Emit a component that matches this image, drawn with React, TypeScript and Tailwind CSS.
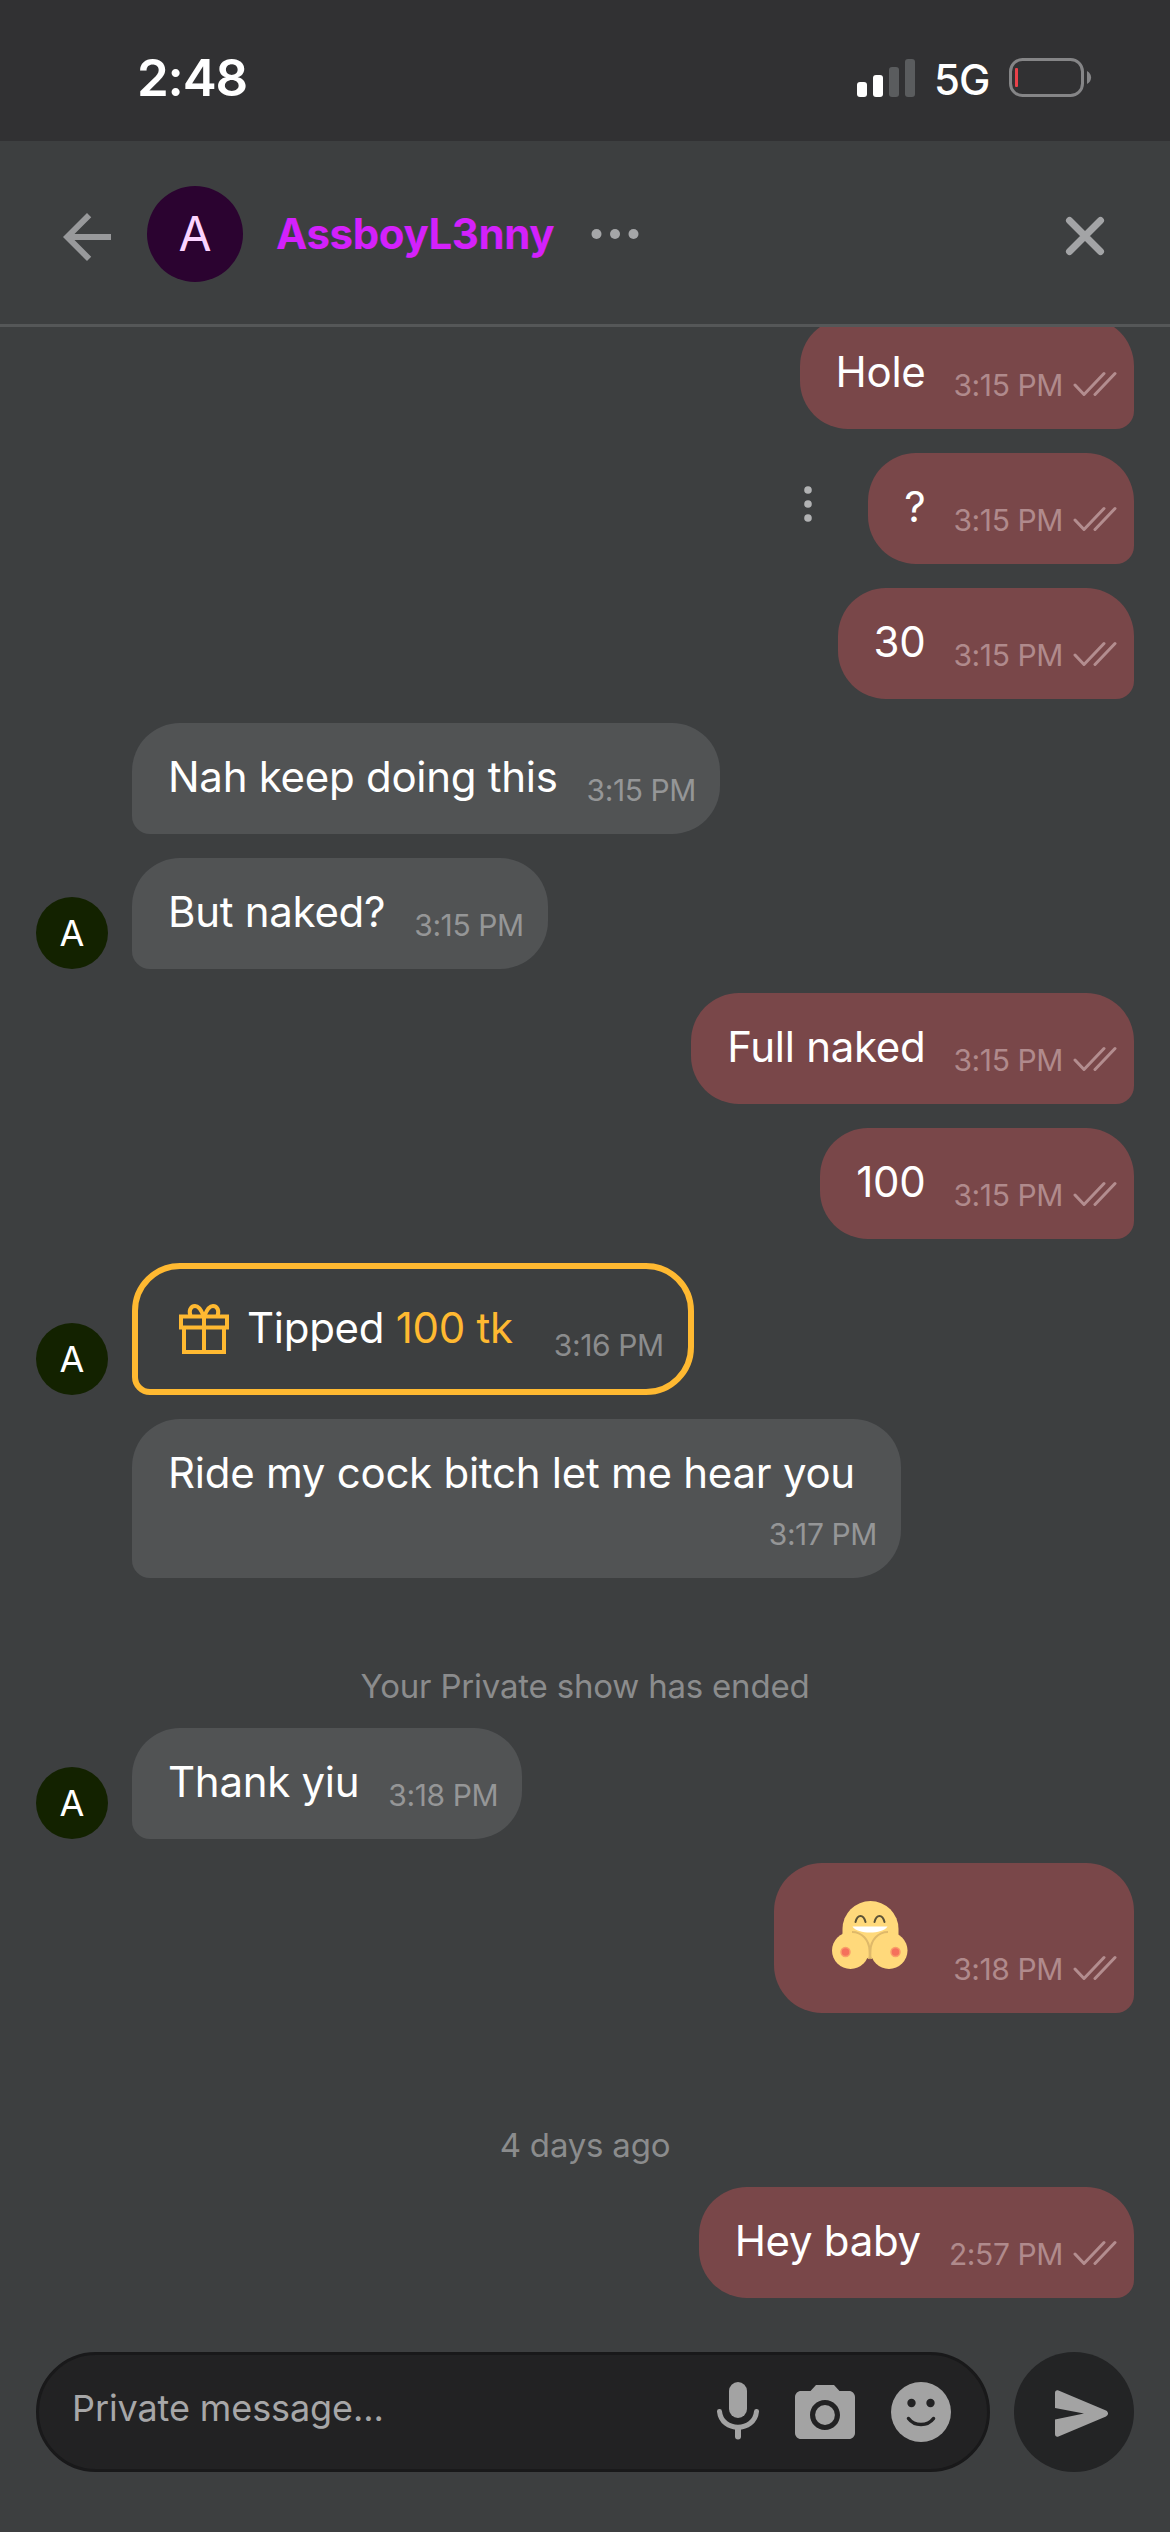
import type { ReactNode } from "react";

type Message = {
    id: number;
    own?: boolean;
    text: string;
    time: string;
    avatar?: boolean;
    menu?: boolean;
};

const firstMessages: Message[] = [
    { id: 1, own: true, text: "Hole", time: "3:15 PM" },
    { id: 2, own: true, text: "?", time: "3:15 PM", menu: true },
    { id: 3, own: true, text: "30", time: "3:15 PM" },
    { id: 4, text: "Nah keep doing this", time: "3:15 PM" },
    { id: 5, text: "But naked?", time: "3:15 PM", avatar: true },
    { id: 6, own: true, text: "Full naked", time: "3:15 PM" },
    { id: 7, own: true, text: "100", time: "3:15 PM" },
];

function StatusBar() {
    return (
        <div className="flex h-[141px] shrink-0 items-start justify-between bg-[#313133] pt-[48px] pr-[77px] pl-[137px] text-white">
            <span className="text-[51px] leading-[60px] font-semibold tracking-[-1.2px]">2:48</span>
            <div className="flex h-[60px] items-center">
                <svg width="58" height="38" viewBox="0 0 58 38">
                    <rect x="0" y="23" width="10" height="15" rx="3" fill="#fff" />
                    <rect x="16" y="16" width="10" height="22" rx="3" fill="#fff" />
                    <rect x="32" y="8" width="10" height="30" rx="3" fill="#5a5c5e" />
                    <rect x="48" y="0" width="10" height="38" rx="3" fill="#5a5c5e" />
                </svg>
                <span className="ml-[19px] w-[75px] pt-[3px] text-[42px] leading-[54px] font-medium tracking-[-1px]">5G</span>
                <svg width="84" height="40" viewBox="0 0 84 40">
                    <rect x="1.5" y="1.5" width="72" height="36" rx="12" fill="none" stroke="#858587" strokeWidth="3" />
                    <rect x="6" y="10" width="3" height="19" rx="1" fill="#e9414a" />
                    <path d="M78 13c5.500 3 5.500 10 0 13z" fill="#858587" />
                </svg>
            </div>
        </div>
    );
}

function Header() {
    return (
        <header className="flex h-[186px] shrink-0 items-center border-b-[3px] border-[#555758] pt-[3px] pr-[64px] pl-[51px]">
            <svg className="mt-[5px]" width="72" height="72" viewBox="0 0 24 24" fill="#98999b">
                <path d="M20 11H7.830l5.590-5.590L12 4l-8 8 8 8 1.410-1.410L7.830 13H20v-2z" />
            </svg>
            <div className="ml-[24px] flex size-[96px] items-center justify-center rounded-full bg-[#2b0330] text-[48px] leading-none text-[#fbd3ff]">
                A
            </div>
            <h1 className="ml-[33px] text-[42px] leading-[54px] font-bold tracking-[-0.4px] text-[#d321fb]">AssboyL3nny</h1>
            <svg className="ml-[37px]" width="48" height="12" viewBox="0 0 48 12" fill="#a5a6a8">
                <circle cx="5.500" cy="6" r="5" />
                <circle cx="24" cy="6" r="5" />
                <circle cx="42.500" cy="6" r="5" />
            </svg>
            <svg className="mt-[3px] ml-auto" width="42" height="42" viewBox="0 0 42 42">
                <path d="M5.500 5.500l31 31M36.500 5.500l-31 31" stroke="#a3a4a6" strokeWidth="7" strokeLinecap="round" />
            </svg>
        </header>
    );
}

function DoubleCheck() {
    return (
        <svg className="mt-[53px] ml-[10px]" width="44" height="26" viewBox="0 0 44 26" fill="none" stroke="#b38d8f" strokeWidth="3" strokeLinecap="round" strokeLinejoin="round">
            <path d="M2 14l9 9.500L31 2.500" />
            <path d="M22 23.500L42 2.500" />
        </svg>
    );
}

function Avatar() {
    return (
        <div className="flex size-[72px] items-center justify-center rounded-full bg-[#132200] text-[36px] leading-none text-white">
            A
        </div>
    );
}

function Time({ children }: { children: ReactNode }) {
    return (
        <span className="text-[30px] leading-[36px] tracking-[-0.4px] whitespace-nowrap">{children}</span>
    );
}

function MessageRow({ message }: { message: Message }) {
    if (message.own) {
        return (
            <div className="flex shrink-0 justify-end pr-[36px]">
                {message.menu && (
                    <svg className="mt-[32px] mr-[55px]" width="10" height="38" viewBox="0 0 10 38" fill="#b1b2b3">
                        <circle cx="5" cy="5" r="3.800" />
                        <circle cx="5" cy="19" r="3.800" />
                        <circle cx="5" cy="33" r="3.800" />
                    </svg>
                )}
                <div className="flex h-[111px] items-start rounded-[48px] rounded-br-[18px] bg-[#794749] pr-[17px] pl-[36px]">
                    <span className="mt-[27px] mr-[28px] text-[42px] leading-[54px] tracking-[-0.28px] text-white">{message.text}</span>
                    <span className="mt-[49px] flex text-[#b08a8c]">
                        <Time>{message.time}</Time>
                    </span>
                    <DoubleCheck />
                </div>
            </div>
        );
    }

    return (
        <div className="flex shrink-0 items-end pl-[36px]">
            <div className="mr-[24px] w-[72px]">{message.avatar && <Avatar />}</div>
            <div className="flex h-[111px] items-start rounded-[48px] rounded-bl-[18px] bg-[#515354] pr-[24px] pl-[36px]">
                <span className="mt-[27px] mr-[29px] text-[42px] leading-[54px] tracking-[-0.28px] text-white">{message.text}</span>
                <span className="mt-[49px] flex text-[#959697]">
                    <Time>{message.time}</Time>
                </span>
            </div>
        </div>
    );
}

function TipRow() {
    return (
        <div className="flex shrink-0 items-end pl-[36px]">
            <div className="mr-[24px]">
                <Avatar />
            </div>
            <div className="flex h-[132px] items-start rounded-[48px] rounded-bl-[18px] border-[6px] border-[#ffb931] pr-[24px] pl-[40px]">
                <svg className="mt-[34px] mr-[17px]" width="52" height="52" viewBox="0 0 52 52" fill="none" stroke="#ffb931" strokeWidth="4">
                    <path d="M3 13.500h46v11H3zM6 24.500V49h40V24.500M26 13v36" />
                    <path d="M25.500 13C23 6 20 3 17 3c-4.500 0-6.500 5-4.500 10M26.500 13C29 6 32 3 35 3c4.500 0 6.500 5 4.500 10" />
                </svg>
                <span className="mt-[32px] mr-[41px] text-[42px] leading-[54px] tracking-[-0.28px] text-white">
                    Tipped <span className="text-[#ffb931]">100 tk</span>
                </span>
                <span className="mt-[58px] flex text-[#8b8c8d]">
                    <Time>3:16 PM</Time>
                </span>
            </div>
        </div>
    );
}

function HugEmoji() {
    return (
        <svg className="mt-[38px] mr-[45px]" width="76" height="68" viewBox="0 0 76 68">
            <path d="M10.500 28a28 28 0 0 1 56 0v8L46 57H31L10.500 36z" fill="#ffd97b" />
            <path d="M23.500 21c2-8 8-8 10 0M42.500 21c2-8 8-8 10 0" fill="none" stroke="#5c5236" strokeWidth="2" strokeLinecap="round" />
            <path d="M20.500 25.500h35c-5 8-30 8-35 0z" fill="#fff" />
            <circle cx="18.500" cy="49.500" r="18.500" fill="#ffd97b" />
            <circle cx="57" cy="49.500" r="18.500" fill="#ffd97b" />
            <path d="M20 31c10 0 17 8 17.500 18s0 6-1 9M56 31c-10 0-17 8-17.500 18s0 6 1 9" fill="none" stroke="#dfb96a" strokeWidth="2" />
            <circle cx="13.500" cy="51" r="4.500" fill="#f5705c" stroke="#fa9d69" strokeWidth="1.500" />
            <circle cx="63.500" cy="51" r="4.500" fill="#f5705c" stroke="#fa9d69" strokeWidth="1.500" />
        </svg>
    );
}

function Composer() {
    return (
        <div className="mt-[54px] flex shrink-0 items-center px-[36px]">
            <div className="flex h-[120px] w-[954px] items-center rounded-full border-[3px] border-[#19191a] bg-[#222223] pr-[36px] pl-[33px]">
                <span className="mr-auto pb-[8px] text-[36px] leading-[48px] tracking-[-0.1px] text-[#a7a7a8]">Private message...</span>
                <svg className="mr-[36px]" width="42" height="60" viewBox="0 0 42 60">
                    <rect x="12" y="0" width="18" height="36" rx="9" fill="#a3a3a3" />
                    <path d="M2.500 29.500c2 21 35 21 37 0" fill="none" stroke="#a3a3a3" strokeWidth="5" strokeLinecap="round" />
                    <path d="M21 46v8.500" stroke="#a3a3a3" strokeWidth="6" strokeLinecap="round" />
                </svg>
                <svg className="mt-[6px] mr-[36px]" width="60" height="60" viewBox="2 2 20 20" fill="#a3a3a3">
                    <circle cx="12" cy="12" r="3.300" />
                    <path d="M9 2 7.170 4H4c-1.100 0-2 .9-2 2v12c0 1.100.9 2 2 2h16c1.100 0 2-.9 2-2V6c0-1.100-.9-2-2-2h-3.170L15 2H9zm3 15c-2.760 0-5-2.240-5-5s2.240-5 5-5 5 2.240 5 5-2.240 5-5 5z" />
                </svg>
                <svg width="60" height="60" viewBox="0 0 60 60">
                    <circle cx="30" cy="30" r="30" fill="#a3a3a3" />
                    <circle cx="20.500" cy="21" r="4.200" fill="#222223" />
                    <circle cx="39.500" cy="21" r="4.200" fill="#222223" />
                    <path d="M17.500 36.500c6 8 19 8 25 0" fill="none" stroke="#222223" strokeWidth="3.500" strokeLinecap="round" />
                </svg>
            </div>
            <div className="ml-auto flex size-[120px] items-center rounded-full bg-[#232425] pl-[41px]">
                <svg className="mt-[3px]" width="53" height="47" viewBox="0 0 53 47">
                    <path d="M0 3C0 .8 1.500-.3 3.500.5L51 20.500c2.700 1.500 2.700 4.500 0 6L3.500 46.500C1.500 47.300 0 46.200 0 44V29.500L29 23.500 0 18z" fill="#a3a3a3" />
                </svg>
            </div>
        </div>
    );
}

export default function App() {
    return (
        <div className="flex h-[2532px] w-[1170px] flex-col overflow-hidden bg-[#3d3f40] font-['Inter',sans-serif]">
            <StatusBar />
            <Header />
            {/* the list is scrolled, so the first bubble is cut by the header */}
            <main className="flex h-[1971px] shrink-0 flex-col justify-end gap-[24px] overflow-hidden">
                {firstMessages.map((message) => (
                    <MessageRow key={message.id} message={message} />
                ))}
                <TipRow />
                <div className="ml-[132px] flex h-[159px] w-[769px] shrink-0 flex-col rounded-[48px] rounded-bl-[18px] bg-[#515354] pt-[27px] pr-[24px] pl-[36px]">
                    <span className="text-[42px] leading-[54px] tracking-[-0.26px] whitespace-nowrap text-white">Ride my cock bitch let me hear you</span>
                    <span className="mt-[16px] self-end text-[#959697]">
                        <Time>3:17 PM</Time>
                    </span>
                </div>
                <p className="h-[102px] shrink-0 pt-[63px] text-center text-[33px] leading-[42px] tracking-[-0.2px] text-[#8b8c8d]">
                    Your Private show has ended
                </p>
                <MessageRow message={{ id: 8, text: "Thank yiu", time: "3:18 PM", avatar: true }} />
                <div className="flex shrink-0 justify-end pr-[36px]">
                    <div className="flex h-[150px] items-start rounded-[48px] rounded-br-[18px] bg-[#794749] pr-[17px] pl-[58px]">
                        <HugEmoji />
                        <span className="mt-[88px] flex text-[#b08a8c]">
                            <Time>3:18 PM</Time>
                        </span>
                        <div className="mt-[39px]">
                            <DoubleCheck />
                        </div>
                    </div>
                </div>
                <p className="h-[126px] shrink-0 pt-[87px] text-center text-[33px] leading-[42px] tracking-[-0.2px] text-[#8b8c8d]">
                    4 days ago
                </p>
                <MessageRow message={{ id: 9, own: true, text: "Hey baby", time: "2:57 PM" }} />
            </main>
            <Composer />
        </div>
    );
}
